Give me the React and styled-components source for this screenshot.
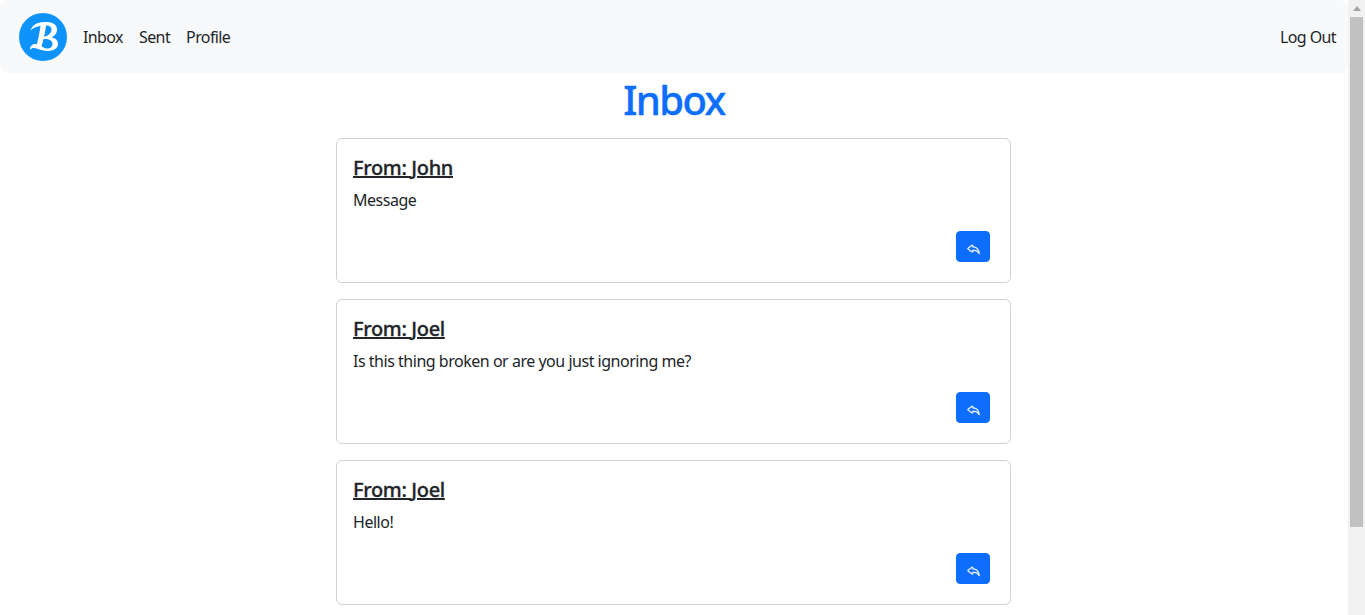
import React from 'react';
import styled, { createGlobalStyle } from 'styled-components';
import { BsReply } from 'react-icons/bs';

const GlobalStyle = createGlobalStyle`
  body{
    margin:0;
    background:#fff;
    color:#212529;
    font-family:"Noto Sans","Open Sans",sans-serif;
    font-size:16px;
    line-height:24px;
  }
`;

const Shell = styled.div`
  height:100vh;
  display:flex;
  overflow:hidden;
`;

const Page = styled.main`
  flex:1;
  min-width:0;
`;

const Scrollbar = styled.aside`
  width:17px;
  flex:none;
  display:flex;
  flex-direction:column;
  background:#f1f1f1;
`;

const ScrollArrow = styled.div`
  height:17px;
  display:flex;
  align-items:center;
  justify-content:center;
  &:before{
    content:"";
    border-style:solid;
    border-width:0 4px 5px 4px;
    border-color:transparent transparent #a3a3a3 transparent;
  }
`;

const ScrollThumb = styled.div`
  height:510px;
  margin:0 2px;
  background:#c1c1c1;
`;

const Navbar = styled.nav`
  height:73px;
  display:flex;
  align-items:center;
  justify-content:space-between;
  padding:0 4px 0 19px;
  background:#f8f9fa;
  border-radius:8px;
`;

const NavLeft = styled.div`
  display:flex;
  align-items:center;
`;

const Logo = styled.svg`
  width:48px;
  height:48px;
  margin-right:8px;
  display:block;
`;

const NavLink = styled.a`
  padding:8px;
  color:#212529;
  letter-spacing:-.6px;
  text-decoration:none;
`;

const Title = styled.h1`
  margin:0;
  padding-top:3px;
  height:65px;
  box-sizing:border-box;
  text-align:center;
  font-size:40px;
  line-height:48px;
  font-weight:500;
  letter-spacing:-1.6px;
  color:#0d6efd;
  -webkit-text-stroke:.4px #0d6efd;
`;

const CardList = styled.div`
  width:675px;
  margin:0 auto 0 336px;
  display:flex;
  flex-direction:column;
  gap:16px;
`;

const Card = styled.div`
  box-sizing:border-box;
  height:145px;
  padding:17px 16px 16px;
  border:1px solid #ced0d2;
  border-radius:6px;
  display:flex;
  flex-direction:column;
`;

const CardTitle = styled.h5`
  margin:0 0 8px;
  font-size:20px;
  line-height:24px;
  font-weight:500;
  letter-spacing:-.35px;
  text-decoration:underline;
  -webkit-text-stroke:.3px #212529;
`;

const CardText = styled.p`
  margin:0;
  letter-spacing:-.48px;
`;

const ReplyButton = styled.button`
  width:34px;
  height:31px;
  margin:auto 4px 4px auto;
  padding:4px 0 0;
  display:flex;
  align-items:center;
  justify-content:center;
  border:1px solid #0d6efd;
  border-radius:4px;
  background:#0d6efd;
  color:#fff;
  font-size:15px;
  svg{
    stroke:#fff;
    stroke-width:.3;
  }
`;

const messages = [
  { from: 'John', text: 'Message' },
  { from: 'Joel', text: 'Is this thing broken or are you just ignoring me?' },
  { from: 'Joel', text: 'Hello!' },
];

export default function App() {
  return (
    <Shell>
      <GlobalStyle />
      <Page>
        <Navbar>
          <NavLeft>
            <Logo viewBox="0 0 48 48">
              <circle cx="24" cy="24" r="24" fill="#0d93fb" />
              <path
                d="M11.500 17.500C13 12.500 18 9 25 9C32 8.500 38 10.500 38 16.500C38 20.500 35.500 23 32.500 24.200C36.500 25 39.500 27.500 39 31.500C38.500 36 33.500 38 28 38C23 38 19 35.500 15.500 35C13.500 34.800 12 35.500 11 36.500C11 33 13.500 31 16.500 31L17.800 31.300C19.500 26 20.500 19 21.500 13C17.500 13.500 14 15 11.500 17.500ZM27 12.500C26.500 16 26 20 25 23.500C29.500 23 32.500 20 32.500 16.500C32.500 13.500 30 12.300 27 12.500ZM24.500 26C24 28.500 23 31.500 22.500 33C24 34.500 26 35.500 28 35.500C31.500 35.500 33.500 33.500 33.500 30.500C33.500 27.500 29.500 25.500 24.500 26Z"
                fill="#fff"
                fillRule="evenodd"
              />
            </Logo>
            <NavLink>Inbox</NavLink>
            <NavLink>Sent</NavLink>
            <NavLink>Profile</NavLink>
          </NavLeft>
          <NavLink>Log Out</NavLink>
        </Navbar>
        <Title>Inbox</Title>
        <CardList>
          {messages.map((m, i) => (
            <Card key={i}>
              <CardTitle>From: {m.from}</CardTitle>
              <CardText>{m.text}</CardText>
              <ReplyButton><BsReply /></ReplyButton>
            </Card>
          ))}
        </CardList>
      </Page>
      <Scrollbar>
        <ScrollArrow />
        <ScrollThumb />
      </Scrollbar>
    </Shell>
  );
}
